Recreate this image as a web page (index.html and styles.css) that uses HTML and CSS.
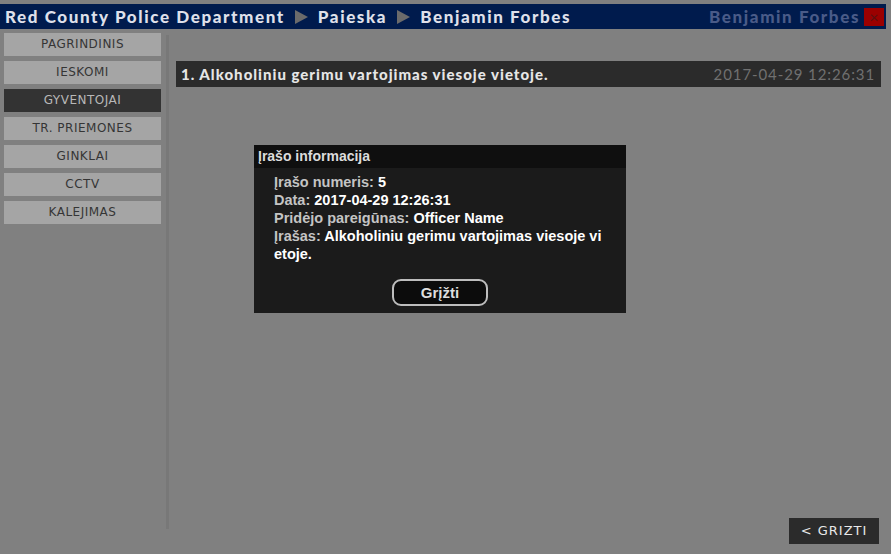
FILE: index.html
```html
<!DOCTYPE html>
<html lang="en">
<head>
    <meta charset="UTF-8">
    <meta name="viewport" content="width=device-width, initial-scale=1.0">
    <title>Red County Police Department</title>
    <link rel="stylesheet" href="styles.css">
</head>
<body>
    <div class="page">
        <div class="topbar">
            <div class="crumbs">
                <span>Red County Police Department</span>
                <span class="arrow"></span>
                <span>Paieska</span>
                <span class="arrow"></span>
                <span>Benjamin Forbes</span>
            </div>
            <div class="user">
                <span>Benjamin Forbes</span>
                <span class="close">&times;</span>
            </div>
        </div>
        <div class="main">
            <div class="sidebar">
                <div class="nav-btn">PAGRINDINIS</div>
                <div class="nav-btn">IESKOMI</div>
                <div class="nav-btn active">GYVENTOJAI</div>
                <div class="nav-btn">TR. PRIEMONES</div>
                <div class="nav-btn">GINKLAI</div>
                <div class="nav-btn">CCTV</div>
                <div class="nav-btn">KALEJIMAS</div>
            </div>
            <div class="divider"></div>
            <div class="content">
                <div class="record">
                    <span class="record-title">1. Alkoholiniu gerimu vartojimas viesoje vietoje.</span>
                    <span class="record-date">2017-04-29 12:26:31</span>
                </div>
                <div class="back-btn">&lt; GRIZTI</div>
            </div>
        </div>
    </div>

    <div class="modal">
        <div class="modal-head">Įrašo informacija</div>
        <div class="modal-body">
            <div class="line"><span class="label">Įrašo numeris:</span> 5</div>
            <div class="line"><span class="label">Data:</span> 2017-04-29 12:26:31</div>
            <div class="line"><span class="label">Pridėjo pareigūnas:</span> Officer Name</div>
            <div class="line wrap"><span class="label">Įrašas:</span> Alkoholiniu gerimu vartojimas viesoje vietoje.</div>
        </div>
        <div class="modal-foot">
            <button class="modal-btn">Grįžti</button>
        </div>
    </div>
</body>
</html>
```

FILE: styles.css
```css
body {
    margin: 0;
    background: #808080;
    font-family: 'Lato', 'DejaVu Sans', sans-serif;
    overflow: hidden;
}

.page {
    height: 554px;
    display: flex;
    flex-direction: column;
}

.topbar {
    margin: 4px 5px 0 0;
    height: 25px;
    background: #001b4d;
    display: flex;
    justify-content: space-between;
    align-items: center;
    font-weight: 900;
    font-size: 17px;
    letter-spacing: 1.6px;
}

.crumbs {
    display: flex;
    align-items: center;
    gap: 10px;
    padding-left: 5px;
    color: #dfe0ea;
}

.arrow {
    width: 0;
    height: 0;
    border-top: 7px solid transparent;
    border-bottom: 7px solid transparent;
    border-left: 13px solid #6b6b6b;
}

.user {
    display: flex;
    align-items: center;
    gap: 4px;
    color: #4a5b88;
    padding-right: 2px;
}

.close {
    width: 20px;
    height: 18px;
    background: #9b0000;
    color: #5a1010;
    font-size: 16px;
    line-height: 18px;
    text-align: center;
    letter-spacing: 0;
    font-weight: 400;
}

.main {
    flex: 1;
    display: flex;
    padding: 4px 0 10px 4px;
}

.sidebar {
    width: 157px;
    display: flex;
    flex-direction: column;
    gap: 5px;
}

.nav-btn {
    height: 23px;
    line-height: 23px;
    background: #a5a5a5;
    color: #353535;
    text-align: center;
    font-family: 'DejaVu Sans', sans-serif;
    font-size: 12px;
    letter-spacing: 0.5px;
}

.nav-btn.active {
    background: #333333;
    color: #b8b8b8;
}

.divider {
    width: 3px;
    background: #787878;
    margin: 2px 7px 15px 5px;
}

.content {
    flex: 1;
    display: flex;
    flex-direction: column;
    padding-right: 10px;
}

.record {
    margin-top: 28px;
    height: 26px;
    background: #2b2b2b;
    display: flex;
    justify-content: space-between;
    align-items: center;
    padding: 0 6px 0 5px;
}

.record-title {
    color: #e6e6e6;
    font-weight: 900;
    font-size: 15px;
    letter-spacing: 1px;
}

.record-date {
    color: #707070;
    font-size: 15px;
    letter-spacing: 0.9px;
}

.back-btn {
    margin-top: auto;
    align-self: flex-end;
    margin-right: 2px;
    width: 90px;
    height: 26px;
    line-height: 26px;
    background: #2b2b2b;
    color: #e8e8e8;
    text-align: center;
    font-family: 'DejaVu Sans', sans-serif;
    font-size: 13px;
    letter-spacing: 1px;
}

/* dialog over the list */
.modal {
    position: absolute;
    left: 254px;
    top: 145px;
    width: 372px;
    height: 168px;
    background: #1b1b1b;
    font-family: 'Liberation Sans', Arial, sans-serif;
    font-weight: bold;
    font-size: 14.5px;
}

.modal-head {
    height: 23px;
    line-height: 23px;
    background: #0f0f0f;
    color: #dcdcdc;
    padding-left: 4px;
    font-size: 14px;
}

.modal-body {
    padding: 5px 20px 0 20px;
    color: #ffffff;
}

.line {
    line-height: 18px;
}

.line.wrap {
    width: 335px;
    word-break: break-all;
}

.label {
    color: #c4c4c4;
}

.modal-foot {
    display: flex;
    justify-content: center;
    margin-top: 16px;
}

.modal-btn {
    width: 96px;
    height: 27px;
    background: #0c0c0c;
    border: 2px solid #bdbdbd;
    border-radius: 9px;
    color: #dedede;
    font-family: 'Liberation Sans', Arial, sans-serif;
    font-weight: bold;
    font-size: 15px;
    padding: 0;
}
```
